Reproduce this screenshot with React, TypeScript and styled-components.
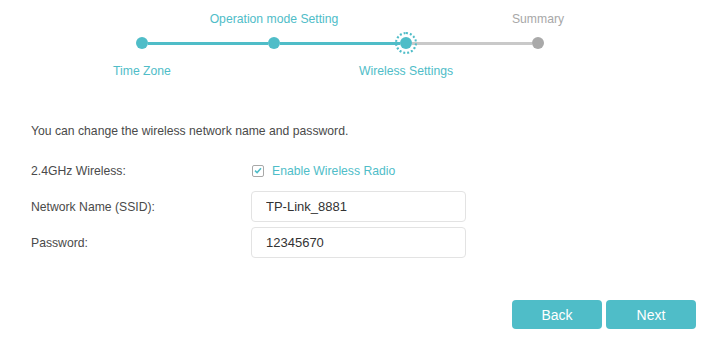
import styled, { createGlobalStyle } from "styled-components";

const teal = "#4fbdc8";

const GlobalStyle = createGlobalStyle`
    html, body {
        margin: 0;
        padding: 0;
        background: #ffffff;
        font-family: "Liberation Sans", Arial, sans-serif;
    }
`;

const Page = styled.div`
    width: 718px;
    height: 344px;
    overflow: hidden;
    background: #ffffff;
`;

const Stepper = styled.div`
    padding: 11px 0 0 76px;
    display: flex;
    flex-direction: column;
`;

const LabelRow = styled.div<{ $gap: number }>`
    display: grid;
    grid-template-columns: repeat(4, 132px);
    height: 17px;
    margin-top: ${(p) => p.$gap}px;
`;

const StepLabel = styled.div<{ $col: number; $done?: boolean }>`
    grid-column: ${(p) => p.$col};
    text-align: center;
    white-space: nowrap;
    font-size: 12.2px;
    line-height: 17px;
    color: ${(p) => (p.$done ? teal : "#a8a8a8")};
`;

const Track = styled.div`
    display: flex;
    align-items: center;
    height: 12px;
    margin: 9px 0 0 60px;
`;

const Dot = styled.div<{ $done?: boolean; $current?: boolean }>`
    position: relative;
    flex: 0 0 12px;
    height: 12px;
    border-radius: 50%;
    background: ${(p) => (p.$done ? teal : "#a9a9a9")};
    &::after {
        content: "";
        display: ${(p) => (p.$current ? "block" : "none")};
        position: absolute;
        left: -5px;
        top: -5px;
        width: 18px;
        height: 18px;
        border: 2px dotted ${teal};
        border-radius: 50%;
    }
`;

const Segment = styled.div<{ $done?: boolean }>`
    flex: 0 0 120px;
    height: 3px;
    background: ${(p) => (p.$done ? teal : "#c9c9c9")};
`;

const Body = styled.div`
    padding: 43px 0 0 31px;
`;

const Intro = styled.p`
    margin: 0;
    font-size: 12.2px;
    line-height: 17px;
    color: #4a4a4a;
`;

const Form = styled.div`
    display: flex;
    flex-direction: column;
    gap: 5px;
    margin-top: 15px;
`;

const Row = styled.div`
    display: flex;
    align-items: center;
    height: 31px;
`;

const Label = styled.div`
    width: 220px;
    font-size: 12.2px;
    color: #4a4a4a;
`;

const CheckLabel = styled.label`
    display: flex;
    align-items: center;
    gap: 8px;
    font-size: 12.2px;
    color: ${teal};
    padding-left: 1px;
`;

const CheckBox = styled.span`
    display: flex;
    align-items: center;
    justify-content: center;
    width: 10px;
    height: 10px;
    border: 1px solid #a8a8a8;
    border-radius: 2px;
`;

const TextInput = styled.input`
    box-sizing: border-box;
    width: 215px;
    height: 31px;
    padding: 0 14px;
    border: 1px solid #e3e3e3;
    border-radius: 4px;
    font-family: "Liberation Sans", Arial, sans-serif;
    font-size: 13px;
    color: #333333;
    outline: none;
`;

const Actions = styled.div`
    display: flex;
    justify-content: flex-end;
    gap: 4px;
    margin-top: 42px;
    padding-right: 22px;
`;

const Button = styled.button`
    width: 90px;
    height: 29px;
    border: none;
    border-radius: 4px;
    background: ${teal};
    color: #ffffff;
    font-family: "Liberation Sans", Arial, sans-serif;
    font-size: 14px;
    cursor: pointer;
`;

const App = () => {
    return (
        <Page>
            <GlobalStyle />
            <Stepper>
                <LabelRow $gap={0}>
                    <StepLabel $col={2} $done>Operation mode Setting</StepLabel>
                    <StepLabel $col={4}>Summary</StepLabel>
                </LabelRow>
                <Track>
                    <Dot $done />
                    <Segment $done />
                    <Dot $done />
                    <Segment $done />
                    <Dot $done $current />
                    <Segment />
                    <Dot />
                </Track>
                <LabelRow $gap={14}>
                    <StepLabel $col={1} $done>Time Zone</StepLabel>
                    <StepLabel $col={3} $done>Wireless Settings</StepLabel>
                </LabelRow>
            </Stepper>
            <Body>
                <Intro>You can change the wireless network name and password.</Intro>
                <Form>
                    <Row>
                        <Label>2.4GHz Wireless:</Label>
                        <CheckLabel>
                            <CheckBox>
                                <svg width="8" height="7" viewBox="0 0 8 7">
                                    <path d="M1 3.6 L3.1 5.5 L7 1.2" fill="none" stroke={teal} strokeWidth="1.6" />
                                </svg>
                            </CheckBox>
                            Enable Wireless Radio
                        </CheckLabel>
                    </Row>
                    <Row>
                        <Label>Network Name (SSID):</Label>
                        <TextInput defaultValue="TP-Link_8881" />
                    </Row>
                    <Row>
                        <Label>Password:</Label>
                        <TextInput defaultValue="12345670" />
                    </Row>
                </Form>
            </Body>
            <Actions>
                <Button>Back</Button>
                <Button>Next</Button>
            </Actions>
        </Page>
    );
};

export default App;
